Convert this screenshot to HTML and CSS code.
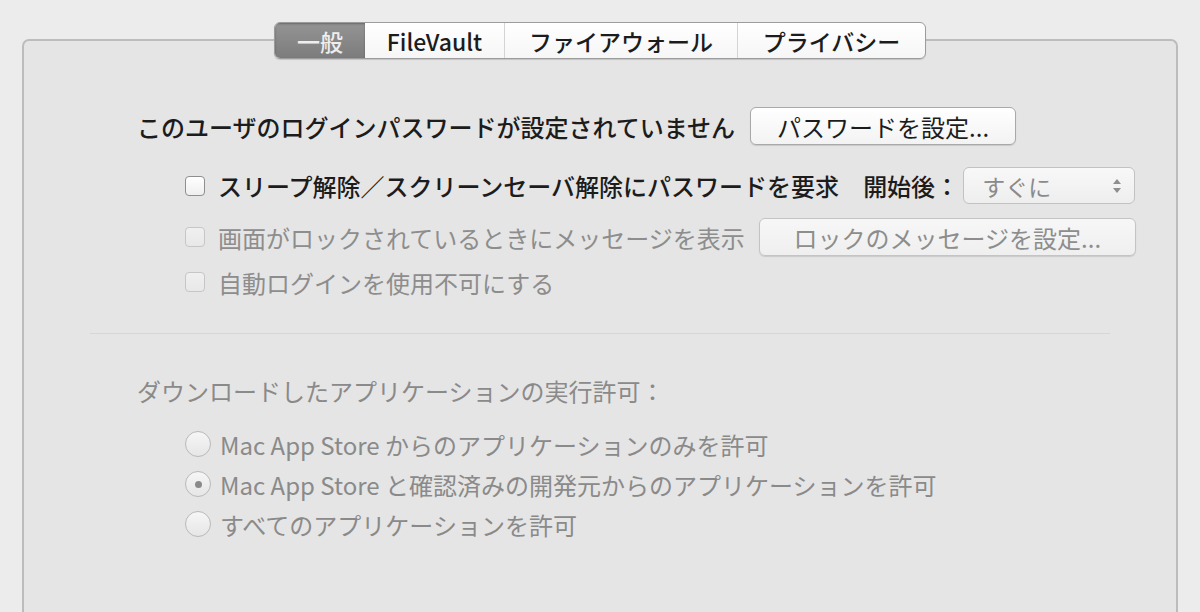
FILE: index.html
```html
<!DOCTYPE html>
<html lang="ja">
<head>
  <meta charset="UTF-8">
  <title>セキュリティとプライバシー</title>
  <link rel="stylesheet" href="styles.css">
</head>
<body>

  <div class="panel">
    <div class="tabs">
      <div class="tab active">一般</div>
      <div class="tab">FileVault</div>
      <div class="tab">ファイアウォール</div>
      <div class="tab">プライバシー</div>
    </div>

    <div class="content">
      <div class="row-login">
        <span>このユーザのログインパスワードが設定されていません</span>
        <button class="btn btn-pass">パスワードを設定...</button>
      </div>

      <div class="options">
        <div class="opt opt-sleep">
          <span class="check"></span>
          <span class="label">スリープ解除／スクリーンセーバ解除にパスワードを要求</span>
          <span class="after">開始後：</span>
          <div class="popup">
            <span>すぐに</span>
            <svg class="arrows" width="10" height="16" viewBox="0 0 10 16">
              <path d="M1 6 L5 1 L9 6 Z" fill="#8e8e8e"/>
              <path d="M1 10 L5 15 L9 10 Z" fill="#8e8e8e"/>
            </svg>
          </div>
        </div>
        <div class="opt opt-lock disabled">
          <span class="check"></span>
          <span class="label">画面がロックされているときにメッセージを表示</span>
          <button class="btn btn-lock">ロックのメッセージを設定...</button>
        </div>
        <div class="opt opt-auto disabled">
          <span class="check"></span>
          <span class="label">自動ログインを使用不可にする</span>
        </div>
      </div>
    </div>

    <div class="separator"></div>

    <div class="content">
      <div class="heading">ダウンロードしたアプリケーションの実行許可：</div>
      <div class="radios">
        <div class="radio-row"><span class="radio"></span>Mac App Store からのアプリケーションのみを許可</div>
        <div class="radio-row"><span class="radio on"></span>Mac App Store と確認済みの開発元からのアプリケーションを許可</div>
        <div class="radio-row"><span class="radio"></span>すべてのアプリケーションを許可</div>
      </div>
    </div>
  </div>

</body>
</html>
```

FILE: styles.css
```css
body {
  margin: 0;
  font-family: "Noto Sans CJK JP", "Noto Sans", sans-serif;
  background: #ececec;
  color: #1c1c1c;
  font-size: 24px;
  overflow: hidden;
}

.panel {
  margin: 39px 22px 0 22px;
  height: 571px;
  background: #e5e5e5;
  border: 2px solid #bcbcbc;
  border-bottom: none;
  border-radius: 7px 7px 0 0;
}

.tabs {
  display: flex;
  width: fit-content;
  margin: -19px auto 0;
  height: 35px;
  background: linear-gradient(#ffffff, #f6f6f6);
  border: 1px solid #9c9c9c;
  border-radius: 6px;
  box-shadow: 0 1px 1px rgba(0, 0, 0, 0.15);
  overflow: hidden;
}

.tab {
  display: flex;
  align-items: center;
  justify-content: center;
  font-size: 23px;
  font-weight: 500;
  border-left: 1px solid #d4d4d4;
  padding: 0 18px;
}

.tab:nth-child(2) {
  width: 103px;
  border-left: none;
}

.tab:nth-child(3) {
  width: 196px;
}

.tab:nth-child(4) {
  width: 151px;
}

.tab.active {
  width: 54px;
  background: linear-gradient(#949494, #7c7c7c);
  color: #eeeeee;
  border-left: none;
  box-shadow: inset 0 1px 2px rgba(0, 0, 0, 0.3);
}

.content {
  padding-left: 113px;
}

.row-login {
  display: flex;
  align-items: center;
  gap: 15px;
  height: 38px;
  margin-top: 48px;
  font-weight: 500;
}

.btn {
  font-family: inherit;
  font-size: 24px;
  height: 38px;
  background: linear-gradient(#ffffff, #f3f3f3);
  border: 1px solid #a9a9a9;
  border-radius: 6px;
  box-shadow: 0 1px 1px rgba(0, 0, 0, 0.12);
  color: #1c1c1c;
  padding: 0;
}

.btn-pass {
  width: 266px;
}

.options {
  padding-left: 48px;
  margin-top: 22px;
}

.opt {
  display: flex;
  align-items: center;
}

.opt-sleep {
  height: 37px;
}

.opt-lock {
  height: 38px;
  margin-top: 14px;
}

.opt-auto {
  height: 36px;
  margin-top: 8px;
}

.check {
  width: 18px;
  height: 18px;
  border: 1px solid #8f8f8f;
  border-radius: 4px;
  background: linear-gradient(#ffffff, #efefef);
  margin-right: 13px;
  flex-shrink: 0;
}

.opt-sleep .label {
  font-weight: 500;
}

.after {
  margin-left: 24px;
  font-weight: 500;
}

.popup {
  display: flex;
  align-items: center;
  justify-content: space-between;
  box-sizing: border-box;
  width: 172px;
  height: 37px;
  margin-left: 4px;
  padding: 0 12px 0 18px;
  background: linear-gradient(#f8f8f8, #eeeeee);
  border: 1px solid #c2c2c2;
  border-radius: 6px;
  color: #8a8a8a;
  font-size: 23px;
}

.disabled {
  color: #8d8d8d;
}

.disabled .check {
  border-color: #c6c6c6;
  background: linear-gradient(#f0f0f0, #e8e8e8);
}

.btn-lock {
  width: 377px;
  margin-left: 14px;
  color: #8d8d8d;
  border-color: #c4c4c4;
  background: linear-gradient(#f7f7f7, #efefef);
}

.separator {
  height: 1px;
  background: #d6d6d6;
  margin: 33px 66px 0 66px;
}

.heading {
  color: #8a8a8a;
  margin-top: 42px;
  height: 30px;
  line-height: 30px;
}

.radios {
  padding-left: 48px;
  margin-top: 18px;
  color: #8a8a8a;
}

.radio-row {
  display: flex;
  align-items: center;
  height: 40px;
}

.radio {
  position: relative;
  width: 24px;
  height: 24px;
  border: 1px solid #b9b9b9;
  border-radius: 50%;
  background: linear-gradient(#f6f6f6, #e6e6e6);
  margin-right: 9px;
  flex-shrink: 0;
}

.radio.on::after {
  content: "";
  position: absolute;
  left: 9px;
  top: 9px;
  width: 7px;
  height: 7px;
  border-radius: 50%;
  background: #8a8a8a;
}
```
